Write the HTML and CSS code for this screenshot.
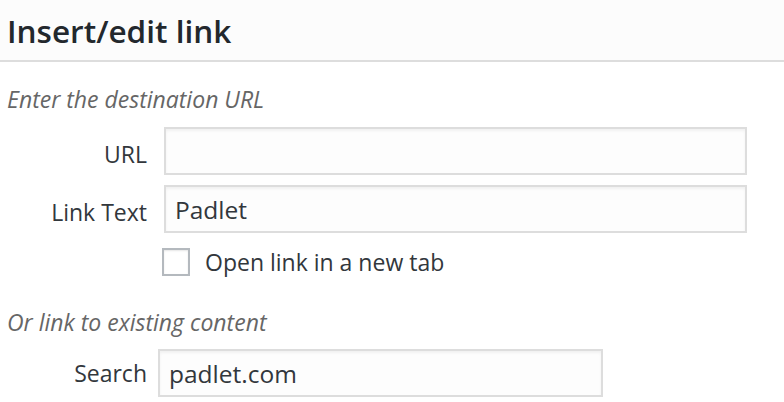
FILE: index.html
```html
<!DOCTYPE html>
<html>
<head>
<meta charset="utf-8">
<link rel="stylesheet" href="styles.css">
</head>
<body>
<div class="header"><h1 class="title">Insert/edit link</h1></div>
<div class="content">
  <p class="howto">Enter the destination URL</p>
  <div class="row first-row">
    <label class="label low">URL</label>
    <div class="input wide"></div>
  </div>
  <div class="row">
    <label class="label low">Link Text</label>
    <div class="input wide">Padlet</div>
  </div>
  <div class="row check-row">
    <span class="checkbox"></span>
    <span class="check-label">Open link in a new tab</span>
  </div>
  <p class="howto howto2">Or link to existing content</p>
  <div class="row search-row">
    <label class="label">Search</label>
    <div class="input search">padlet.com</div>
  </div>
</div>
</body>
</html>
```
FILE: styles.css
```css
html, body {
  margin: 0;
  padding: 0;
  background: #fff;
  font-family: "Open Sans", "Noto Sans", sans-serif;
  color: #32373c;
}
.header {
  height: 60px;
  background: #fcfcfc;
  border-bottom: 2px solid #dddddd;
  display: flex;
  align-items: center;
  padding-left: 7px;
}
.title {
  margin: 0;
  font-size: 31.5px;
  font-weight: 600;
  color: #23282d;
  line-height: 1;
  padding-top: 1px;
}
.content {
  padding-left: 7px;
}
.howto {
  margin: 0;
  padding-top: 21px;
  font-style: italic;
  font-size: 23px;
  color: #666;
  line-height: 32px;
}
.row {
  display: flex;
  align-items: center;
  margin-top: 10px;
}
.first-row { margin-top: 12px; }
.label {
  width: 157px;
  text-align: right;
  font-size: 23px;
  color: #32373c;
  padding-right: 17px;
  box-sizing: border-box;
  flex: none;
}
.label.low { padding-top: 6px; }
.input {
  box-sizing: border-box;
  height: 48px;
  border: 2px solid #dddddd;
  box-shadow: inset 0 2px 3px rgba(0,0,0,0.05);
  background: #fdfdfd;
  font-size: 24.5px;
  color: #32373c;
  padding-left: 9px;
  display: flex;
  align-items: center;
}
.wide { width: 583px; }
.check-row {
  margin-top: 13px;
  padding-left: 155px;
}
.checkbox {
  width: 28px;
  height: 28px;
  box-sizing: border-box;
  border: 2px solid #b4b9be;
  background: #fff;
  box-shadow: inset 0 1px 2px rgba(0,0,0,0.1);
}
.check-label {
  margin-left: 15px;
  font-size: 23px;
  color: #32373c;
}
.howto2 { padding-top: 28px; }
.search-row { margin-top: 11px; }
.search-row .label { width: 151px; padding-right: 11px; }
.search { width: 445px; }
```
